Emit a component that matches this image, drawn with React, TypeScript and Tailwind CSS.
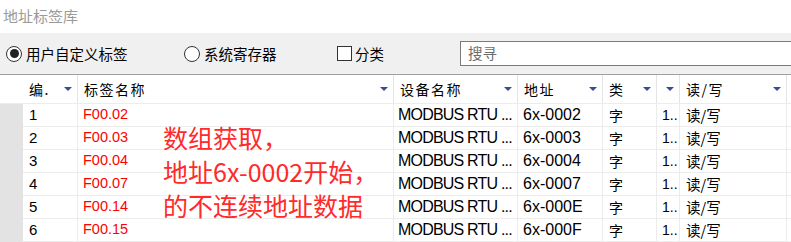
const cols = [
  { key: 'no', label: '编.', w: 'w-[55px]' },
  { key: 'name', label: '标签名称', w: 'w-[316px]' },
  { key: 'dev', label: '设备名称', w: 'w-[124px]' },
  { key: 'addr', label: '地址', w: 'w-[85px]' },
  { key: 'type', label: '类', w: 'w-[54px]' },
  { key: 'len', label: '', w: 'w-[23px]' },
  { key: 'rw', label: '读/写', w: 'w-[107px]' },
];

const rows = [
  ['1', 'F00.02', '6x-0002'],
  ['2', 'F00.03', '6x-0003'],
  ['3', 'F00.04', '6x-0004'],
  ['4', 'F00.07', '6x-0007'],
  ['5', 'F00.14', '6x-000E'],
  ['6', 'F00.15', '6x-000F'],
];

const cjk = "font-['Microsoft_YaHei','Noto_Sans_CJK_SC',sans-serif]";
const latin = "font-['Liberation_Sans','Noto_Sans_CJK_SC',sans-serif]";

function Arrow() {
  return (
    <svg width="8" height="5" viewBox="0 0 8 5" className="shrink-0">
      <path d="M0 0H8L4 4Z" fill="#3b4a94" />
    </svg>
  );
}

export default function App() {
  return (
    <div className={`relative w-[791px] h-[242px] overflow-hidden bg-white ${cjk}`}>
      {/* Title */}
      <div className="h-[33px] flex items-center pl-[3px] text-[15px] text-[#9a9a9a]">地址标签库</div>

      {/* Toolbar */}
      <div className="h-[42px] bg-[#f0f0f0] border-b border-[#a0a0a0] flex items-center text-[14.5px] text-black">
        <label className="flex items-center ml-[6px] w-[178px]">
          <span className="w-[16px] h-[16px] rounded-full border-[1.5px] border-[#333] flex items-center justify-center bg-white">
            <span className="w-[9px] h-[9px] rounded-full bg-[#222]" />
          </span>
          <span className="ml-[4px]">用户自定义标签</span>
        </label>
        <label className="flex items-center w-[153px]">
          <span className="w-[16px] h-[16px] rounded-full border-[1.5px] border-[#333] bg-white" />
          <span className="ml-[4px]">系统寄存器</span>
        </label>
        <label className="flex items-center w-[123px]">
          <span className="w-[15px] h-[15px] border border-[#333] bg-white" />
          <span className="ml-[3px]">分类</span>
        </label>
        <div className="flex-1 h-[25px] mt-[-1px] border border-[#7a7a7a] border-r-0 bg-white flex items-center pl-[7px] text-[#6d6d6d]">
          搜寻
        </div>
      </div>

      {/* Header */}
      <div className="flex h-[29px] border-b border-[#ececec] text-[14px] tracking-[1.5px] text-black">
        <div className="w-[23px]" />
        {cols.map((c) => (
          <div key={c.key} className={`${c.w} flex items-center justify-between pl-[6px] pr-[5px] border-r border-[#e4e4e4]`}>
            <span>{c.label}</span>
            <Arrow />
          </div>
        ))}
      </div>

      {/* Rows */}
      {rows.map(([n, name, addr]) => (
        <div key={n} className="flex h-[23px] text-[14px]">
          <div className="w-[23px] bg-[#e3e3e3]" />
          <div className="flex flex-1 border-b border-[#ececec]">
            <div className={`w-[55px] pl-[6px] flex items-center border-r border-[#ececec] text-[15px] ${latin}`}>{n}</div>
            <div className={`w-[316px] pl-[5px] flex items-center border-r border-[#ececec] text-[#ff0000] text-[14.5px] ${latin}`}>{name}</div>
            <div className={`w-[124px] pl-[4px] flex items-center border-r border-[#ececec] text-[16px] tracking-[-0.8px] whitespace-nowrap ${latin}`}>MODBUS RTU ...</div>
            <div className={`w-[85px] pl-[5px] flex items-center border-r border-[#ececec] text-[16px] ${latin}`}>{addr}</div>
            <div className="w-[54px] pl-[6px] flex items-center border-r border-[#ececec]">字</div>
            <div className={`w-[23px] pl-[5px] flex items-center border-r border-[#ececec] ${latin}`}>1..</div>
            <div className="w-[107px] pl-[6px] flex items-center border-r border-[#ececec] text-[14.5px]">读/写</div>
          </div>
        </div>
      ))}

      {/* Annotation */}
      <div className="absolute left-[163px] top-[120px] text-[25px] leading-[34px] text-[#ff2a2a] font-['Noto_Sans_CJK_SC',sans-serif]">
        <div>数组获取，</div>
        <div>地址6x-0002开始，</div>
        <div>的不连续地址数据</div>
      </div>
    </div>
  );
}
